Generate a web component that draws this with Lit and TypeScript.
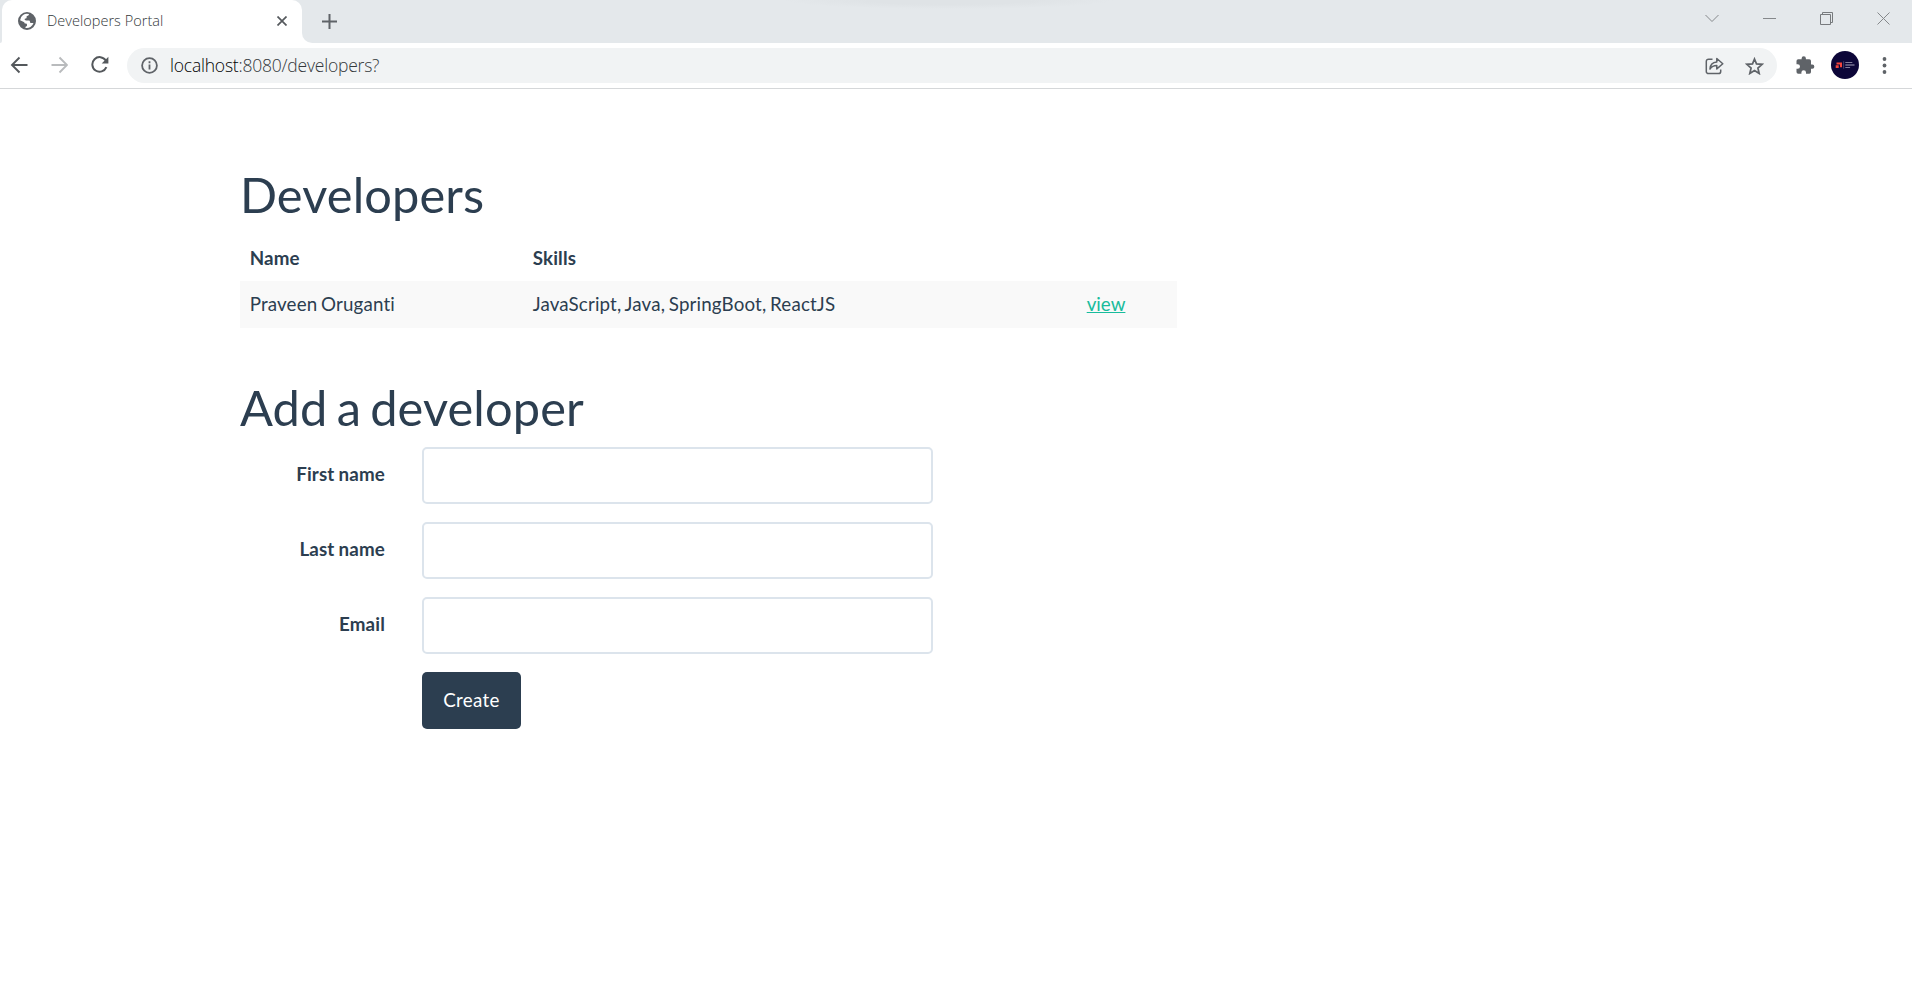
import { LitElement, html, css, svg } from "lit";
import { customElement, property } from "lit/decorators.js";

const globe = svg`<path fill="#5f6368" fill-rule="evenodd" d="M9 0a9 9 0 1 0 0 18A9 9 0 0 0 9 0Zm1.9 1.9c.2 1-.2 1.6-1.2 1.9-1 .2-1.3.8-1.1 1.6.2.7-.3 1.1-1.1 1.1-.9 0-1.1.6-.7 1.2.3.5.7.7 1.4.7h2.5c1 0 1.3.6 1.3 1.5 0 .8.5 1.1 1.3 1.1h2.2A7 7 0 0 1 7.600 15.900c-.3-.7-.2-1.2.5-1.500.8-.3 1.100-.8.9-1.700-.1-.8-.6-1.100-1.400-1.100-.9 0-1.300-.5-1.300-1.400L2.100 8.200A7 7 0 0 1 10.900 1.900Z"/>`;

@customElement("browser-chrome")
export class BrowserChrome extends LitElement {
  static styles = css`
    :host { display: block; font-family: "Open Sans", "Noto Sans", sans-serif; }
    svg { display: block; flex: none; }
    .strip { height: 43px; background: #e4e8eb; display: flex; align-items: stretch; }
    .corner { width: 2px; background: #fff; }
    .corner i { display: block; height: 43px; background: #e4e8eb; border-bottom-right-radius: 8px; }
    .tab {
      width: 300px; box-sizing: border-box; background: #fff; border-radius: 10px 10px 0 0;
      display: flex; align-items: center; padding: 0 15px 2px 16px;
    }
    .title { margin-left: 11px; padding-top: 1px; flex: 1; font-size: 14.5px; font-weight: 300; color: #34383b; letter-spacing: 0.03px; white-space: nowrap; }
    .foot { flex: 1; background: linear-gradient(#fff, #fff) 0 100% / 12px 12px no-repeat; display: flex; }
    .rest { flex: 1; border-bottom-left-radius: 10px; display: flex; align-items: flex-start; background: radial-gradient(ellipse 165px 9px at 647px 0, #dfe3e6 50%, #e4e8eb 100%); }
    .plus { margin: 14px 0 0 20px; }
    .controls { margin-left: auto; display: flex; gap: 44px; padding: 11px 22px 0 0; }
    .bar { height: 45px; background: #fff; border-bottom: 1px solid #d5d7d9; display: flex; align-items: center; }
    .nav { display: flex; gap: 22px; padding: 0 0 2px 10px; }
    .navwrap { width: 127px; }
    .box { width: 1650px; height: 35px; border-radius: 18px; background: #f1f3f4; display: flex; align-items: center; box-sizing: border-box; padding: 0 13px 0 14px; }
    .url { margin-left: 12px; flex: 1; font-size: 17.5px; font-weight: 300; color: #34383b; letter-spacing: -0.21px; white-space: nowrap; }
    .host { color: #000; }
    .star { margin-left: 21px; }
    .puzzle { margin-left: 19px; }
    .avatar { margin: 0 0 1px 16px; }
    .dots { margin: 0 0 1px 23px; }
  `;
  @property() address = "/developers?";

  render() {
    return html`
      <div class="strip">
        <div class="corner"><i></i></div>
        <div class="tab">
          <svg width="18" height="18" viewBox="0 0 18 18">${globe}</svg>
          <span class="title">Developers Portal</span>
          <svg width="10" height="10" viewBox="0 0 10 10" stroke="#55595d" stroke-width="1.7"><path d="M.5.5l9 9M9.500.5l-9 9"/></svg>
        </div>
        <div class="foot"><div class="rest">
          <svg class="plus" width="15" height="15" viewBox="0 0 15 15" stroke="#5f6368" stroke-width="2"><path d="M7.500 0v15M0 7.500h15"/></svg>
          <div class="controls">
            <svg width="14" height="14" viewBox="0 0 14 14" fill="none" stroke="#85888b"><path d="M.5 4l6.500 6.500L13.500 4"/></svg>
            <svg width="13" height="14" viewBox="0 0 13 14" fill="none" stroke="#85888b"><path d="M0 7.500h13"/></svg>
            <svg width="13" height="14" viewBox="0 0 13 14" fill="none" stroke="#777a7d"><path d="M.5 3.500h10v10h-10zM2.500 3.500v-2h10v10h-2"/></svg>
            <svg width="13" height="14" viewBox="0 0 13 14" fill="none" stroke="#85888b"><path d="M.5 1.500l12 12M12.500 1.500l-12 12"/></svg>
          </div>
        </div></div>
      </div>
      <div class="bar">
        <div class="navwrap"><div class="nav">
          <svg width="18" height="18" viewBox="0 0 18 18" fill="none" stroke="#54585c" stroke-width="1.900"><path d="M17.500 9H2.500M9.500 1.500L2 9l7.500 7.500"/></svg>
          <svg width="18" height="18" viewBox="0 0 18 18" fill="none" stroke="#b9bbbd" stroke-width="1.900"><path d="M1.500 9h15M9.500 1.500L17 9l-7.500 7.500"/></svg>
          <svg width="19" height="18" viewBox="0 0 19 18"><path fill="none" stroke="#54585c" stroke-width="2" d="M15.800 4.500A7.300 7.300 0 1 0 16.400 11.200"/><path fill="#54585c" d="M18.400 .8V7.500h-6.700z"/></svg>
        </div></div>
        <div class="box">
          <svg width="17" height="17" viewBox="0 0 17 17"><circle cx="8.500" cy="8.500" r="7.400" fill="none" stroke="#5f6368" stroke-width="1.800"/><path fill="#5f6368" d="M7.600 7.500h1.800v5H7.600zM7.600 4.300h1.800v1.900H7.600z"/></svg>
          <span class="url"><span class="host">localhost</span>:8080${this.address}</span>
          <svg width="19" height="18" viewBox="0 0 19 18" fill="none" stroke="#5f6368" stroke-width="1.500" stroke-linejoin="round"><path d="M7.500 2.200H3.500a2.200 2.200 0 0 0-2.200 2.200v10a2.200 2.200 0 0 0 2.200 2.200h10a2.200 2.200 0 0 0 2.200-2.200v-1.900"/><path d="M5 12c.2-4.600 2.500-6.700 6.800-7V1.500l6 5.200-6 5.200V8.600C8.700 8.600 6.600 9.500 5 12Z"/></svg>
          <svg class="star" width="19" height="18" viewBox="0 0 19 18" fill="none" stroke="#5f6368" stroke-width="1.700"><path d="M9.500 2l2 4.900 5.700.4-4.300 3.700 1.300 5.500-4.700-2.900-4.700 2.900L6.100 11 1.800 7.300l5.700-.4z"/></svg>
        </div>
        <svg class="puzzle" width="19" height="19" viewBox="0 0 19 19"><path fill="#5f6368" d="M16.300 8.600H15V5a1.700 1.700 0 0 0-1.700-1.700H9.900V2.400a2.100 2.100 0 0 0-4.300 0v.9H2.200A1.700 1.700 0 0 0 .5 5v3.200h1.200a2.300 2.300 0 0 1 0 4.600H.5V16a1.700 1.700 0 0 0 1.700 1.700h3.200v-1.200a2.300 2.300 0 0 1 4.600 0v1.200h3.300A1.700 1.700 0 0 0 15 16v-3.300h1.300a2.050 2.050 0 0 0 0-4.100Z"/></svg>
        <svg class="avatar" width="28" height="28" viewBox="0 0 28 28"><circle cx="14" cy="14" r="14" fill="#0c0638"/><path fill="#f4443c" d="M5.500 11.500h5.500v4.800H9v-2.800H5.500zM4.700 14.300h3v2.800h-3z"/><path fill="#6d698c" d="M12.500 10.300h.6v7.500h-.6z"/><path fill="#a7a4bb" d="M14.300 11h7v.8h-7zM14.300 13.500h9.200v.9h-9.200zM14.300 15.900h4.800v.8h-4.800z"/></svg>
        <svg class="dots" width="5" height="17" viewBox="0 0 5 17" fill="#5f6368"><circle cx="2.500" cy="2" r="1.900"/><circle cx="2.500" cy="8.500" r="1.900"/><circle cx="2.500" cy="15" r="1.900"/></svg>
      </div>`;
  }
}

@customElement("app-root")
export class AppRoot extends LitElement {
  static styles = css`
    :host {
      display: block; height: 992px; overflow: hidden; background: #fff; color: #2c3e50;
      font: 18.75px/26.8px Lato, sans-serif; font-variant-ligatures: none; letter-spacing: 0.15px;
    }
    main { padding: 78px 0 0 240px; width: 937px; word-spacing: -1.2px; }
    h1 { font-size: 48.75px; line-height: 54px; font-weight: 400; margin: 0 0 13px; letter-spacing: 0.12px; word-spacing: -3.4px; }
    .row { display: grid; grid-template-columns: 283px 554px 1fr; padding: 10px 0 10px 9.7px; box-sizing: border-box; height: 47px; }
    .head { font-weight: 700; padding-top: 11px; }
    .data { background: #f9f9f9; }
    a { color: #18bc9c; text-decoration: underline; letter-spacing: 0; }
    .second { margin-top: 52px; }
    .field { display: grid; grid-template-columns: 145px 511px; column-gap: 37px; margin-bottom: 18px; }
    label { font-weight: 700; text-align: right; padding-top: 14px; word-spacing: -0.6px; }
    input { box-sizing: border-box; width: 100%; height: 57px; border: 2px solid #dce4ec; border-radius: 5px; background: #fff; font: inherit; padding: 0 18px; outline: none; }
    button { grid-column: 2; justify-self: start; width: 99px; height: 57px; border: 0; border-radius: 5px; background: #2c3e50; color: #fff; font: inherit; letter-spacing: 0.35px; padding: 0 0 1px; }
  `;

  private developers = [{ name: "Praveen Oruganti", skills: ["JavaScript", "Java", "SpringBoot", "ReactJS"] }];
  private fields = ["First name", "Last name", "Email"];

  render() {
    return html`
      <browser-chrome></browser-chrome>
      <main>
        <h1>Developers</h1>
        <div class="row head"><span>Name</span><span>Skills</span></div>
        ${this.developers.map((d) => html`<div class="row data"><span>${d.name}</span><span>${d.skills.join(", ")}</span><span><a href="#">view</a></span></div>`)}
        <h1 class="second">Add a developer</h1>
        <form>
          ${this.fields.map((f) => html`<div class="field"><label>${f}</label><input type="text" aria-label=${f} /></div>`)}
          <div class="field"><button type="button">Create</button></div>
        </form>
      </main>`;
  }
}
